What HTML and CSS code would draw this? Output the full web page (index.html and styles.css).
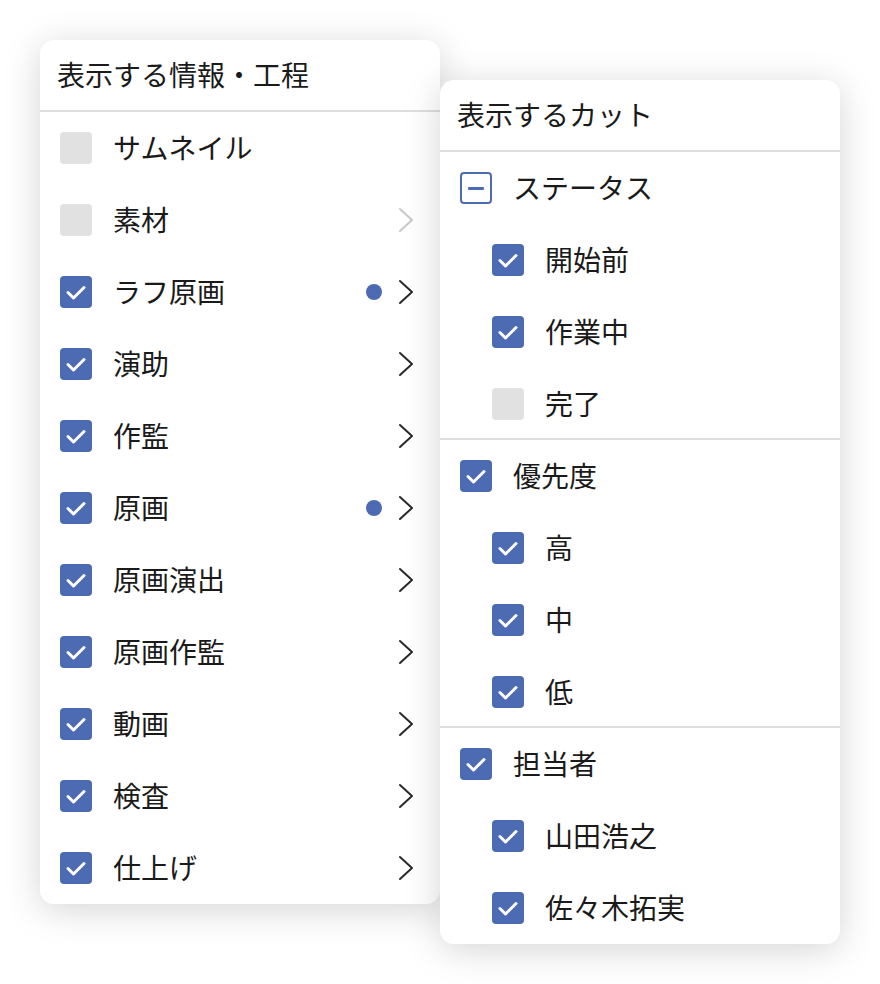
FILE: index.html
```html
<!DOCTYPE html>
<html lang="ja">
<head>
    <meta charset="UTF-8">
    <meta name="viewport" content="width=device-width, initial-scale=1.0">
    <title>表示設定</title>
    <link rel="stylesheet" href="styles.css">
</head>
<body>
    <div class="stage">
        <div class="panel panel-steps">
            <div class="panel-header">表示する情報・工程</div>
            <div class="row"><span class="box"></span><span class="label">サムネイル</span></div>
            <div class="row"><span class="box"></span><span class="label">素材</span>
                <svg class="chevron faded" viewBox="0 0 16 26"><polyline points="2,2 14,13 2,24"/></svg></div>
            <div class="row"><span class="box checked"><svg viewBox="0 0 32 32"><polyline points="8,16.5 13.5,22 24,11.5"/></svg></span><span class="label">ラフ原画</span>
                <span class="dot"></span>
                <svg class="chevron" viewBox="0 0 16 26"><polyline points="2,2 14,13 2,24"/></svg></div>
            <div class="row"><span class="box checked"><svg viewBox="0 0 32 32"><polyline points="8,16.5 13.5,22 24,11.5"/></svg></span><span class="label">演助</span>
                <svg class="chevron" viewBox="0 0 16 26"><polyline points="2,2 14,13 2,24"/></svg></div>
            <div class="row"><span class="box checked"><svg viewBox="0 0 32 32"><polyline points="8,16.5 13.5,22 24,11.5"/></svg></span><span class="label">作監</span>
                <svg class="chevron" viewBox="0 0 16 26"><polyline points="2,2 14,13 2,24"/></svg></div>
            <div class="row"><span class="box checked"><svg viewBox="0 0 32 32"><polyline points="8,16.5 13.5,22 24,11.5"/></svg></span><span class="label">原画</span>
                <span class="dot"></span>
                <svg class="chevron" viewBox="0 0 16 26"><polyline points="2,2 14,13 2,24"/></svg></div>
            <div class="row"><span class="box checked"><svg viewBox="0 0 32 32"><polyline points="8,16.5 13.5,22 24,11.5"/></svg></span><span class="label">原画演出</span>
                <svg class="chevron" viewBox="0 0 16 26"><polyline points="2,2 14,13 2,24"/></svg></div>
            <div class="row"><span class="box checked"><svg viewBox="0 0 32 32"><polyline points="8,16.5 13.5,22 24,11.5"/></svg></span><span class="label">原画作監</span>
                <svg class="chevron" viewBox="0 0 16 26"><polyline points="2,2 14,13 2,24"/></svg></div>
            <div class="row"><span class="box checked"><svg viewBox="0 0 32 32"><polyline points="8,16.5 13.5,22 24,11.5"/></svg></span><span class="label">動画</span>
                <svg class="chevron" viewBox="0 0 16 26"><polyline points="2,2 14,13 2,24"/></svg></div>
            <div class="row"><span class="box checked"><svg viewBox="0 0 32 32"><polyline points="8,16.5 13.5,22 24,11.5"/></svg></span><span class="label">検査</span>
                <svg class="chevron" viewBox="0 0 16 26"><polyline points="2,2 14,13 2,24"/></svg></div>
            <div class="row"><span class="box checked"><svg viewBox="0 0 32 32"><polyline points="8,16.5 13.5,22 24,11.5"/></svg></span><span class="label">仕上げ</span>
                <svg class="chevron" viewBox="0 0 16 26"><polyline points="2,2 14,13 2,24"/></svg></div>
        </div>

        <div class="panel panel-cuts">
            <div class="panel-header">表示するカット</div>
            <div class="group">
                <div class="row"><span class="box partial"><span class="bar"></span></span><span class="label">ステータス</span></div>
                <div class="row sub"><span class="box checked"><svg viewBox="0 0 32 32"><polyline points="8,16.5 13.5,22 24,11.5"/></svg></span><span class="label">開始前</span></div>
                <div class="row sub"><span class="box checked"><svg viewBox="0 0 32 32"><polyline points="8,16.5 13.5,22 24,11.5"/></svg></span><span class="label">作業中</span></div>
                <div class="row sub"><span class="box"></span><span class="label">完了</span></div>
            </div>
            <div class="group">
                <div class="row"><span class="box checked"><svg viewBox="0 0 32 32"><polyline points="8,16.5 13.5,22 24,11.5"/></svg></span><span class="label">優先度</span></div>
                <div class="row sub"><span class="box checked"><svg viewBox="0 0 32 32"><polyline points="8,16.5 13.5,22 24,11.5"/></svg></span><span class="label">高</span></div>
                <div class="row sub"><span class="box checked"><svg viewBox="0 0 32 32"><polyline points="8,16.5 13.5,22 24,11.5"/></svg></span><span class="label">中</span></div>
                <div class="row sub"><span class="box checked"><svg viewBox="0 0 32 32"><polyline points="8,16.5 13.5,22 24,11.5"/></svg></span><span class="label">低</span></div>
            </div>
            <div class="group last">
                <div class="row"><span class="box checked"><svg viewBox="0 0 32 32"><polyline points="8,16.5 13.5,22 24,11.5"/></svg></span><span class="label">担当者</span></div>
                <div class="row sub"><span class="box checked"><svg viewBox="0 0 32 32"><polyline points="8,16.5 13.5,22 24,11.5"/></svg></span><span class="label">山田浩之</span></div>
                <div class="row sub"><span class="box checked"><svg viewBox="0 0 32 32"><polyline points="8,16.5 13.5,22 24,11.5"/></svg></span><span class="label">佐々木拓実</span></div>
            </div>
        </div>
    </div>
</body>
</html>
```

FILE: styles.css
```css
body {
    margin: 0;
    background: #fff;
    font-family: "Noto Sans CJK JP", "Noto Sans", sans-serif;
    color: #1a1a1a;
}
.stage {
    display: flex;
    align-items: flex-start;
    padding: 40px;
}
.panel {
    position: relative;
    width: 400px;
    background: #fff;
    border-radius: 14px;
    box-shadow: 0 6px 36px rgba(0, 0, 0, 0.17);
    overflow: hidden;
}
.panel-cuts {
    margin-top: 40px;
    z-index: 1;
}
.panel-header {
    height: 72px;
    box-sizing: border-box;
    display: flex;
    align-items: center;
    padding: 0 17px 4px;
    font-size: 28px;
    box-shadow: inset 0 -2px 0 #dedede;
}
.row {
    height: 72px;
    display: flex;
    align-items: center;
    padding: 0 26px 0 20px;
}
.row.sub {
    padding-left: 52px;
}
.group {
    box-shadow: inset 0 -2px 0 #dedede;
}
.group.last {
    box-shadow: none;
}
.label {
    flex: 1;
    margin-left: 21px;
    font-size: 28px;
    line-height: 1;
    padding-bottom: 2px;
}
.box {
    flex: none;
    width: 32px;
    height: 32px;
    box-sizing: border-box;
    border-radius: 4px;
    background: #e1e1e1;
    display: flex;
    align-items: center;
    justify-content: center;
}
.box.checked {
    background: #4d6bb3;
}
.box svg {
    width: 32px;
    height: 32px;
    fill: none;
    stroke: #fff;
    stroke-width: 3;
    stroke-linecap: round;
    stroke-linejoin: round;
}
.box.partial {
    background: #fff;
    border: 2px solid #4d6bb3;
}
.bar {
    width: 16px;
    height: 3px;
    border-radius: 1px;
    background: #4d6bb3;
}
.dot {
    width: 16px;
    height: 16px;
    border-radius: 50%;
    background: #4d6bb3;
    margin-right: 16px;
}
.chevron {
    width: 16px;
    height: 26px;
    fill: none;
    stroke: #2a2a2a;
    stroke-width: 2;
    stroke-linecap: round;
    stroke-linejoin: round;
}
.chevron.faded {
    stroke: #c8c8c8;
}
```
